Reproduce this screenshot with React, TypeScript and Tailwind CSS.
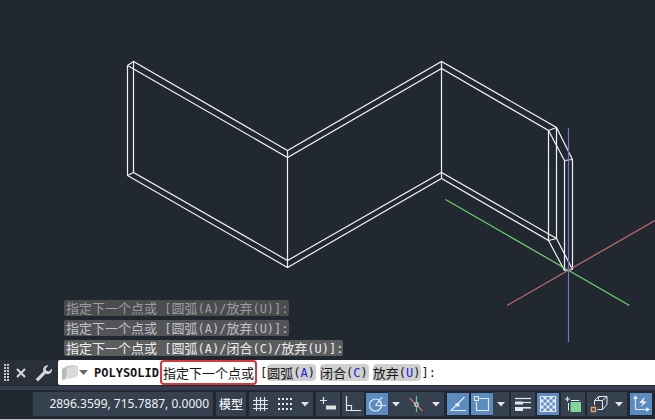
import { Fragment, type ReactNode } from "react";

const HISTORY = [
  { text: "指定下一个点或 [圆弧(A)/放弃(U)]:", tone: "bg-[#4a4c4e] text-[#9b9da0]" },
  { text: "指定下一个点或 [圆弧(A)/放弃(U)]:", tone: "bg-[#525456] text-[#bfc1c3]" },
  { text: "指定下一个点或 [圆弧(A)/闭合(C)/放弃(U)]:", tone: "bg-[#5c5d5e] text-[#ededed]" },
];

const OPTIONS = [
  { label: "圆弧", key: "A" },
  { label: "闭合", key: "C" },
  { label: "放弃", key: "U" },
];

/* Latin runs use the narrower monospaced size, Chinese runs keep the line's own size. */
function Mixed({ text }: { text: string }) {
  return (
    <>
      {text.split(/([\x20-\x7e]+)/).map((part, i) =>
        i % 2 ? (
          <span key={i} className="font-['DejaVu_Sans_Mono',monospace] text-[12px]">
            {part}
          </span>
        ) : (
          <Fragment key={i}>{part}</Fragment>
        ),
      )}
    </>
  );
}

function Model() {
  return (
    <svg className="absolute top-0 left-0" width="655" height="360" viewBox="0 0 655 360" fill="none" strokeWidth="1.2" aria-hidden="true">
      <g stroke="#f0f2f3">
        <path d="M127.5 65.5 133.5 61.5 287.5 150.5 441.5 61.5 556.5 127.5 572.5 159.5" />
        <path d="M127.5 65.5 287.5 157.5 441.5 68.5 548.5 130.5 564.5 160.5" />
        <path d="M127.5 175.5 133.5 172.5 287.5 260.5 441.5 172.5 556.5 238.5 572.5 269.5" />
        <path d="M127.5 175.5 287.5 267.5 441.5 178.5 548.5 240.5 564.5 270.5" />
        <path d="M127.5 65.5V175.5M133.5 61.5V172.5M287.5 150.5V267.5M441.5 61.5V178.5M548.5 130.5V240.5M556.5 127.5V238.5M564.5 160.5V270.5M572.5 159.5V269.5" />
        <path d="M548.5 130.5 556.5 127.5M564.5 160.5 572.5 159.5M548.5 240.5 556.5 238.5M564.5 270.5 572.5 269.5" />
      </g>
      <path stroke="#c76c70" d="M507 305.5 655 220.5" />
      <path stroke="#6fd472" d="M445.5 199.5 629.5 305.5" />
      <path stroke="#776fc8" d="M568.5 128V342" />
    </svg>
  );
}

function Tool({ label, on, narrow, children }: { label: string; on?: boolean; narrow?: boolean; children: ReactNode }) {
  const look = on ? "h-[22px] w-[22px] bg-[#5a8cc2]" : narrow ? "h-6 w-[22px] bg-[#364150]" : "h-6 w-6 bg-[#364150]";
  return (
    <button type="button" aria-label={label} aria-pressed={!!on} className={`flex shrink-0 items-center justify-center ${look}`}>
      <svg width="18" height="18" viewBox="0 0 18 18" fill="none" stroke="#e4e8ec" strokeWidth="1.2" aria-hidden="true">
        {children}
      </svg>
    </button>
  );
}

function More({ label }: { label: string }) {
  return (
    <button type="button" aria-label={label} className="flex h-6 w-4 shrink-0 items-center justify-center bg-[#364150]">
      <svg width="8" height="5" viewBox="0 0 8 5" fill="#dfe3e7" aria-hidden="true">
        <path d="M0 0H8L4 4.6Z" />
      </svg>
    </button>
  );
}

function Group({ children }: { children: ReactNode }) {
  return <div className="flex shrink-0 items-center gap-[2px]">{children}</div>;
}

function Joined({ children }: { children: ReactNode }) {
  return <div className="flex shrink-0 items-center">{children}</div>;
}

export default function App() {
  return (
    <div className="flex h-screen flex-col overflow-hidden bg-[#212830] font-['Noto_Sans_CJK_SC',sans-serif]">
      <main className="relative flex flex-1 flex-col justify-end pb-1 pl-16">
        <Model />
        <div className="relative flex flex-col items-start gap-1 text-[13px]">
          {HISTORY.map((h, i) => (
            <p key={i} className={`flex h-4 items-center rounded-xs pl-[2px] leading-4 whitespace-pre ${h.tone}`}>
              <span>
                <Mixed text={h.text} />
              </span>
            </p>
          ))}
        </div>
      </main>

      <section aria-label="命令行" className="flex h-[25px] shrink-0 bg-[#2a303a]">
        <div className="flex w-[58px] shrink-0 items-center pl-[3px]">
          <svg width="8" height="18" viewBox="0 0 8 18" fill="#c6cacf" aria-hidden="true">
            {[0, 3, 6, 9, 12, 15].map((y) => (
              <path key={y} d={`M1 ${y}h2v2h-2zM4 ${y}h2v2h-2z`} />
            ))}
          </svg>
          <button type="button" aria-label="关闭" className="ml-1 flex w-3 justify-center">
            <svg width="10" height="10" viewBox="0 0 10 10" stroke="#d6d9dc" strokeWidth="2" aria-hidden="true">
              <path d="M1 1 9 9M9 1 1 9" />
            </svg>
          </button>
          <button type="button" aria-label="自定义" className="ml-2">
            <svg width="18" height="18" viewBox="0 0 18 18" aria-hidden="true">
              <path d="M2.9 15.3 10 8" stroke="#d6d9dc" strokeWidth="3.2" strokeLinecap="square" />
              <path d="M13.6 1.4a4.4 4.4 0 0 0-5.2 5.9l2.5 2.5a4.4 4.4 0 0 0 6-5.2L14 7.4l-2.8-.6-.5-2.5z" fill="#d6d9dc" />
            </svg>
          </button>
        </div>
        <div className="flex min-w-0 flex-1 items-center rounded-l-xs bg-white text-[13px] leading-5 whitespace-pre text-[#161616]">
          <button type="button" aria-label="最近使用的命令" className="flex shrink-0 items-center pl-1">
            <svg width="17" height="17" viewBox="0 0 17 17" aria-hidden="true">
              <path d="M0 5 4 2V13L0 16Z" fill="#d5d6d5" />
              <path d="M4 2 13 1V12L4 13Z" fill="#c9cac9" />
              <path d="M0 5 4 4V15L0 16Z" fill="#b9bab9" />
              <path d="M5 4 12 3 16 1V12L12 14 5 15Z" fill="#d9dad9" />
            </svg>
            <svg width="9" height="5" viewBox="0 0 9 5" fill="#666" aria-hidden="true">
              <path d="M0 0H9L4.5 5Z" />
            </svg>
          </button>
          <span className="ml-[6px] font-['DejaVu_Sans_Mono',monospace] text-[12px] font-bold">POLYSOLID</span>
          <span className="ml-px flex h-[25px] items-center rounded-sm border-2 border-[#d8393d] px-px">指定下一个点或</span>
          <span className="ml-[3px] font-['DejaVu_Sans_Mono',monospace] text-[12px]">[</span>
          <span className="flex gap-1">
            {OPTIONS.map((o) => (
              <button key={o.key} type="button" className="flex h-[17px] items-center rounded-sm bg-[#d0d0d0] pr-px">
                {o.label}
                <span className="font-['DejaVu_Sans_Mono',monospace] text-[12px]">
                  (<span className="text-[#2020e0]">{o.key}</span>)
                </span>
              </button>
            ))}
          </span>
          <span className="font-['DejaVu_Sans_Mono',monospace] text-[12px]">]:</span>
        </div>
      </section>

      <footer className="flex h-[35px] shrink-0 flex-col border-b border-[#b9bec6] bg-[#212832] pt-px">
        <div className="h-1 shrink-0 bg-[#383e50]" />
        <div className="flex items-center gap-[3px] pt-[2px] pl-[33px]">
          <div className="flex h-6 w-[180px] shrink-0 items-center justify-end bg-[#364150] pr-1 font-['Noto_Sans',sans-serif] text-[12px] text-[#eef1f4]">
            2896.3599, 715.7887, 0.0000
          </div>
          <button type="button" className="h-6 w-[30px] shrink-0 bg-[#364150] text-[12px] font-medium text-[#eef1f4]">
            模型
          </button>
          <Joined>
            <Tool label="栅格">
              <path d="M4.5 2V16M8.5 2V16M12.5 2V16M1 5.5H16M1 9.5H16M1 13.5H16" />
            </Tool>
            <Tool label="捕捉模式">
              {[2, 6, 10, 14].map((x) => (
                <path key={x} d={`M${x} 4h2M${x} 9h2M${x} 14h2`} strokeWidth="2" />
              ))}
            </Tool>
            <More label="捕捉设置" />
          </Joined>
          <Group>
            <Tool label="动态输入">
              <path d="M1 5.5H8M4.5 2V9" />
              <path d="M7 10.5H17V14.5H7Z" fill="#dbe4d8" stroke="none" />
            </Tool>
            <Tool label="正交" narrow>
              <path d="M2.5 1V15.5H17M2.5 10.5H7.5V15.5" />
            </Tool>
            <Joined>
              <Tool label="极轴追踪" on>
                <circle cx="7.5" cy="10" r="6" />
                <path d="M7.5 10.5H18M7.5 10.5 14 2M11 6A5.500 5.500 0 0 1 12.500 13" />
              </Tool>
              <More label="极轴设置" />
              <Tool label="等轴测草图">
                <path d="M2.5 3 15.5 16" stroke="#c9727a" />
                <path d="M9.5 1V17" stroke="#64c98c" />
                <path d="M8 8h3v3H8z" fill="#364150" />
              </Tool>
              <More label="等轴测设置" />
            </Joined>
          </Group>
          <Group>
            <Tool label="对象捕捉追踪" on>
              <path d="M15.5 2 2 15.5H17" />
              <path d="M6.5 8h4v3.5h-4z" fill="#e4e8ec" stroke="none" />
            </Tool>
            <Joined>
              <Tool label="对象捕捉" on>
                <path d="M3.5 6.5V15.5H15.5V3.5H6.5" />
                <path d="M1.5 1.5h4v4h-4z" />
              </Tool>
              <More label="对象捕捉设置" />
            </Joined>
            <Tool label="线宽">
              <path d="M1 3.5H17" />
              <path d="M1 8H9" strokeWidth="3" />
              <path d="M9 7.5H17" />
              <path d="M1 14H9" strokeWidth="4" />
              <path d="M9 12.8H17" strokeWidth="1.6" />
            </Tool>
            <Tool label="透明度" on>
              <path d="M1.5 1.5h15v15h-15z" />
              {[0, 1, 2, 3, 4].map((r) =>
                [0, 1, 2, 3, 4].map((c) =>
                  (r + c) % 2 ? (
                    <rect key={`${r}${c}`} x={1.5 + c * 3} y={1.5 + r * 3} width="3" height="3" fill="#e4e8ec" stroke="none" />
                  ) : null,
                ),
              )}
            </Tool>
            <Tool label="选择循环">
              <path d="M1 4H6M3.500 1.500V6.500" />
              <path d="M4.500 8V15.500M7 5.500H15.500" strokeWidth="1" />
              <path d="M6.5 7H17V17H6.5Z" fill="#7fd49a" stroke="none" />
            </Tool>
            <Joined>
              <Tool label="三维对象捕捉">
                <path d="M4.500 10V5.500L8.500 1.500H17V9.500L12.500 14.500H7.500M4.500 5.500H12.500V14.500M12.500 5.500 17 1.500M8.500 1.500V5.500" strokeWidth="1" />
                <path d="M1.500 12.500h4v4h-4z" stroke="#e8a76a" strokeWidth="1.400" />
              </Tool>
              <More label="三维捕捉设置" />
            </Joined>
          </Group>
          <Tool label="动态 UCS" on>
            <path d="M3.5 3V14.5H15" />
            <path d="M3.5 0 6 4H1ZM18 14.5 14 12V17Z" fill="#e4e8ec" stroke="none" />
            <path d="M12.5 2 7 8H10.5L9 12 15 6.5H11.5Z" fill="#e4e8ec" stroke="none" />
          </Tool>
        </div>
      </footer>
    </div>
  );
}
